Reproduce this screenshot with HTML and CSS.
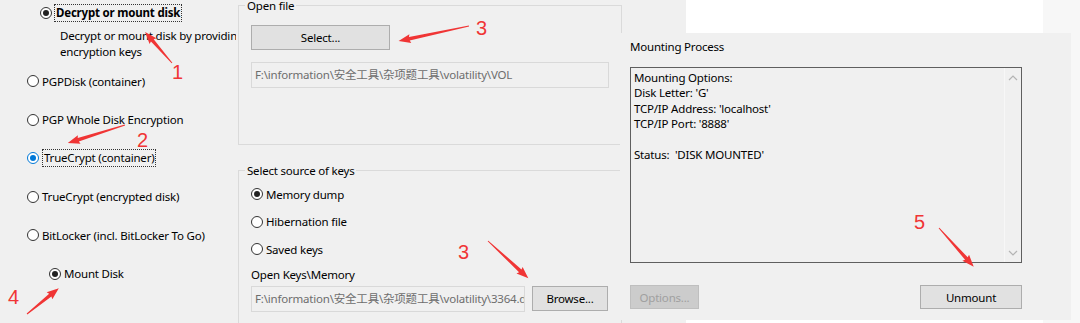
FILE: index.html
```html
<!DOCTYPE html>
<html lang="en">
<head>
    <meta charset="UTF-8">
    <meta name="viewport" content="width=device-width, initial-scale=1.0">
    <title>Mount Disk</title>
    <link rel="stylesheet" href="styles.css">
</head>
<body>
    <div class="canvas">
        <div class="backdrop white"></div>
        <div class="backdrop pale"></div>

        <!-- left: disk type choice -->
        <section class="pane pane-left">
            <div class="opt opt-main">
                <span class="radio on"></span><span class="focus bold">Decrypt or mount disk</span>
            </div>
            <p class="desc">Decrypt or mount disk by providing the<br>encryption keys</p>
            <ul class="opts">
                <li><span class="radio"></span>PGPDisk (container)</li>
                <li><span class="radio"></span>PGP Whole Disk Encryption</li>
                <li><span class="radio on blue"></span><span class="focus">TrueCrypt (container)</span></li>
                <li><span class="radio"></span>TrueCrypt (encrypted disk)</li>
                <li><span class="radio"></span>BitLocker (incl. BitLocker To Go)</li>
                <li class="sub"><span class="radio on"></span>Mount Disk</li>
            </ul>
        </section>

        <!-- middle: file + keys -->
        <section class="pane pane-mid">
            <div class="group group-file">
                <span class="group-title">Open file</span>
                <button class="btn btn-select">Select...</button>
                <div class="path">F:\information\安全工具\杂项题工具\volatility\VOL</div>
            </div>
            <div class="group group-keys">
                <span class="group-title">Select source of keys</span>
                <div class="key-opt"><span class="radio on"></span>Memory dump</div>
                <div class="key-opt"><span class="radio"></span>Hibernation file</div>
                <div class="key-opt"><span class="radio"></span>Saved keys</div>
                <div class="field-label">Open Keys\Memory</div>
                <div class="path-row">
                    <div class="path short">F:\information\安全工具\杂项题工具\volatility\3364.dmp</div>
                    <button class="btn btn-browse">Browse...</button>
                </div>
            </div>
        </section>

        <!-- right: mounting process -->
        <section class="pane pane-mount">
            <div class="mount-title">Mounting Process</div>
            <div class="log">
                <div class="log-text">
                    Mounting Options:<br>
                    Disk Letter: 'G'<br>
                    TCP/IP Address: 'localhost'<br>
                    TCP/IP Port: '8888'<br>
                    <br>
                    Status:&nbsp; 'DISK MOUNTED'
                </div>
                <div class="scroll">
                    <svg width="10" height="6" viewBox="0 0 10 6"><path d="M1 5 L5 1 L9 5" fill="none" stroke="#b4b4b4" stroke-width="1.2"/></svg>
                    <svg width="10" height="6" viewBox="0 0 10 6"><path d="M1 1 L5 5 L9 1" fill="none" stroke="#b4b4b4" stroke-width="1.2"/></svg>
                </div>
            </div>
            <div class="mount-actions">
                <button class="btn btn-options" disabled>Options...</button>
                <button class="btn btn-unmount">Unmount</button>
            </div>
        </section>

        <!-- red annotations -->
        <svg class="marks" width="1080" height="323" viewBox="0 0 1080 323">
            <g fill="#f03535">
                <polygon transform="translate(172 63) rotate(-131)" points="0,-0.5 30,-1.8 29,-4.5 41,0 29,4.5 30,1.8 0,0.5"/>
                <polygon transform="translate(125 125) rotate(162.5)" points="0,-0.5 49,-1.8 48,-4.5 60,0 48,4.5 49,1.8 0,0.5"/>
                <polygon transform="translate(469 26) rotate(167.9)" points="0,-0.5 61,-1.8 60,-4.5 72,0 60,4.5 61,1.8 0,0.5"/>
                <polygon transform="translate(488 241) rotate(42.8)" points="0,-0.5 44,-1.8 43,-4.5 55,0 43,4.5 44,1.8 0,0.5"/>
                <polygon transform="translate(27 314) rotate(-39.1)" points="0,-0.5 30,-1.8 29,-4.5 41,0 29,4.5 30,1.8 0,0.5"/>
                <polygon transform="translate(939 228) rotate(48.1)" points="0,-0.5 41,-1.8 40,-4.5 52,0 40,4.5 41,1.8 0,0.5"/>
            </g>
        </svg>
        <span class="num n1">1</span>
        <span class="num n2">2</span>
        <span class="num n3a">3</span>
        <span class="num n3b">3</span>
        <span class="num n4">4</span>
        <span class="num n5">5</span>
    </div>
</body>
</html>
```

FILE: styles.css
```css
body {
    margin: 0;
    background-color: #f0f0f0;
    font-family: "Noto Sans", "Noto Sans CJK SC", sans-serif;
    font-size: 11.5px;
    letter-spacing: -0.2px;
    color: #000;
}
.canvas {
    position: relative;
    width: 1080px;
    height: 323px;
    overflow: hidden;
}
.backdrop {
    position: absolute;
    top: 0;
    height: 323px;
}
.backdrop.white {
    left: 686px;
    width: 357px;
    background-color: #fff;
}
.backdrop.pale {
    left: 1043px;
    width: 37px;
    background-color: #f7f7f7;
}
.pane {
    position: absolute;
    box-sizing: border-box;
    background-color: #f0f0f0;
}

/* radios */
.radio {
    display: inline-flex;
    align-items: center;
    justify-content: center;
    box-sizing: border-box;
    width: 12px;
    height: 12px;
    margin-right: 3px;
    border: 1px solid #333;
    border-radius: 50%;
    background-color: #fff;
    flex: none;
}
.radio.on::after {
    content: "";
    width: 6px;
    height: 6px;
    border-radius: 50%;
    background-color: #222;
}
.radio.blue {
    border-color: #0078d7;
}
.radio.blue::after {
    background-color: #0078d7;
}
.focus {
    border: 1px dotted #333;
    padding: 0 1px;
    line-height: 16px;
}
.bold {
    font-weight: bold;
}

/* left pane */
.pane-left {
    left: 0;
    top: 0;
    width: 236px;
    height: 323px;
    padding-top: 4px;
    overflow: hidden;
    white-space: nowrap;
}
.opt-main {
    display: flex;
    align-items: center;
    height: 18px;
    margin-left: 40px;
}
.opt-main .radio {
    margin-right: 2px;
}
.desc {
    margin: 6px 0 0 60px;
    line-height: 16px;
}
.opts {
    list-style: none;
    margin: 11px 0 0 0;
    padding: 0 0 0 27px;
}
.opts li {
    display: flex;
    align-items: center;
    height: 20px;
    margin-bottom: 18.5px;
}
.opts li.sub {
    margin-left: 22px;
}

/* middle pane */
.pane-mid {
    left: 238px;
    top: 0;
    width: 390px;
    height: 323px;
    background: transparent;
}
.group {
    box-sizing: border-box;
    width: 384px;
    border: 1px solid #dadada;
    padding-left: 12px;
}
.group-title {
    display: block;
    width: max-content;
    margin: -8px 0 0 -6px;
    padding: 0 2px;
    line-height: 16px;
    background-color: #f0f0f0;
}
.group-file {
    height: 140px;
    margin-top: 5px;
}
.group-keys {
    height: 170px;
    margin-top: 25px;
}
.btn {
    box-sizing: border-box;
    height: 25px;
    padding: 0;
    border: 1px solid #adadad;
    background-color: #e1e1e1;
    font-family: inherit;
    font-size: 11.5px;
    letter-spacing: -0.2px;
    color: #000;
}
.btn-select {
    display: block;
    width: 139px;
    margin-top: 11px;
}
.path {
    box-sizing: border-box;
    width: 358px;
    height: 26px;
    margin-top: 12px;
    padding: 0 3px;
    border: 1px solid #d9d9d9;
    line-height: 24px;
    color: #6d6d6d;
    white-space: nowrap;
    overflow: hidden;
}
.key-opt {
    display: flex;
    align-items: center;
    height: 20px;
    margin-bottom: 7.5px;
}
.key-opt:first-of-type {
    margin-top: 5px;
}
.field-label {
    margin-top: 2px;
    line-height: 16px;
}
.path-row {
    display: flex;
    align-items: center;
    gap: 7px;
    margin-top: 3px;
}
.path.short {
    width: 274px;
    margin-top: 0;
}
.btn-browse {
    flex: none;
    width: 76px;
}

/* right pane */
.pane-mount {
    left: 620px;
    top: 33px;
    width: 451px;
    height: 287px;
    padding: 6px 0 0 10px;
}
.mount-title {
    line-height: 16px;
}
.log {
    display: flex;
    box-sizing: border-box;
    width: 392px;
    height: 196px;
    margin-top: 12px;
    border: 1px solid #5f5f5f;
}
.log-text {
    flex: 1;
    padding: 2px 0 0 3px;
    line-height: 15.4px;
}
.scroll {
    display: flex;
    flex-direction: column;
    justify-content: space-between;
    align-items: center;
    width: 16px;
    padding: 7px 0 6px;
    border-left: 1px solid #f7f7f7;
}
.mount-actions {
    display: flex;
    justify-content: space-between;
    width: 392px;
    margin-top: 22px;
}
.btn-options {
    width: 69px;
    height: 24px;
    border-color: #bfbfbf;
    background-color: #cccccc;
    color: #a0a0a0;
}
.btn-unmount {
    width: 102px;
    height: 24px;
}

/* annotations */
.marks {
    position: absolute;
    left: 0;
    top: 0;
    pointer-events: none;
}
.num {
    position: absolute;
    font-family: "Liberation Sans", sans-serif;
    font-size: 20px;
    line-height: 20px;
    letter-spacing: 0;
    color: #f03535;
}
.n1 { left: 172px; top: 62px; }
.n2 { left: 137px; top: 130px; }
.n3a { left: 476px; top: 18px; }
.n3b { left: 458px; top: 242px; }
.n4 { left: 8px; top: 287px; }
.n5 { left: 914px; top: 212px; }
```
